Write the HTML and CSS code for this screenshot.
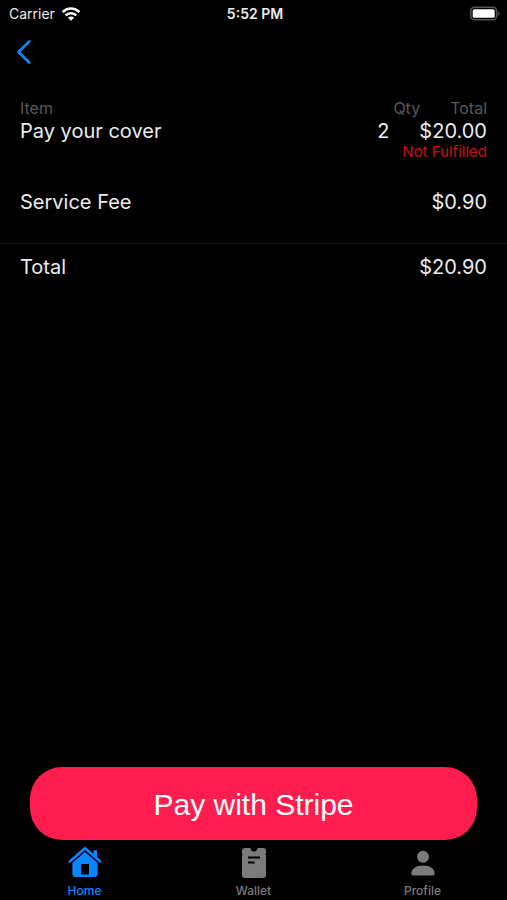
FILE: index.html
```html
<!DOCTYPE html>
<html lang="en">
<head>
<meta charset="utf-8">
<meta name="viewport" content="width=device-width, initial-scale=1">
<title>Checkout</title>
<link rel="stylesheet" href="styles.css">
</head>
<body>
<header class="status">
  <div class="carrier">
    <span>Carrier</span>
    <svg width="20" height="14" viewBox="0 0 20 14" fill="none" stroke="#fff" stroke-width="2.5" aria-hidden="true">
      <path d="M1.6 5.1C6.4.4 13.6.4 18.4 5.1"/>
      <path d="M4.7 8.4C7.7 5.4 12.3 5.4 15.3 8.4"/>
      <path d="M10 13.8 6.9 10.7C8.6 9.1 11.4 9.1 13.1 10.7Z" fill="#fff" stroke="none"/>
    </svg>
  </div>
  <span class="time">5:52 PM</span>
  <svg class="battery" width="32" height="16" viewBox="0 0 32 16" aria-hidden="true">
    <rect x="1.7" y="1.2" width="26" height="12.6" rx="4" fill="none" stroke="#555" stroke-width="1.6"/>
    <rect x="3.7" y="3.2" width="22" height="8.6" rx="1.6" fill="#fff"/>
    <path d="M29.3 5.2C31.2 6 31.2 9 29.3 9.8Z" fill="#555"/>
  </svg>
</header>
<nav class="topbar">
  <a class="back" href="#" aria-label="Back">
    <svg width="16" height="26" viewBox="0 0 16 26" fill="none" stroke="#1283f0" stroke-width="2.8" stroke-linecap="round" stroke-linejoin="round"><path d="M13.2 2.6 2.5 13 13.2 23.4"/></svg>
  </a>
</nav>
<main>
  <table class="order">
    <thead>
      <tr class="head"><th class="name">Item</th><th>Qty</th><th>Total</th></tr>
    </thead>
    <tbody>
      <tr><td class="name">Pay your cover</td><td>2</td><td>$20.00</td></tr>
      <tr class="note"><td>Not Fulfilled</td></tr>
      <tr class="fee"><td class="name">Service Fee</td><td>$0.90</td></tr>
    </tbody>
    <tfoot>
      <tr class="sum"><td class="name">Total</td><td>$20.90</td></tr>
    </tfoot>
  </table>
</main>
<div class="action"><button class="pay" type="button">Pay with Stripe</button></div>
<nav class="tabs">
  <a class="tab active" href="#">
    <svg width="34" height="32" viewBox="0 0 34 32" aria-hidden="true">
      <path d="M1.8 15.4 17 2.2 32.2 15.4" fill="none" stroke="currentColor" stroke-width="2.6" stroke-linecap="round" stroke-linejoin="round"/>
      <path d="M25.4 4.2H29V13L25.4 9.8Z" fill="currentColor"/>
      <path fill-rule="evenodd" fill="currentColor" d="M17 6 29.6 16.8V28Q29.6 31 26.6 31H7.4Q4.4 31 4.4 28V16.8ZM13 18V28.4H21V18Z"/>
    </svg>
    <span>Home</span>
  </a>
  <a class="tab" href="#">
    <svg width="34" height="32" viewBox="0 0 34 32" aria-hidden="true">
      <path fill="currentColor" d="M8 2H13.4Q14 5.6 17 5.6T20.6 2H26Q29 2 29 5V7.5L28.4 8.5 29 9.5V29Q29 32 26 32H8Q5 32 5 29V9.5L5.6 8.5 5 7.5V5Q5 2 8 2Z"/>
      <path d="M11 11.5H23M11 16.5H17.5" stroke="#000" stroke-width="2"/>
    </svg>
    <span>Wallet</span>
  </a>
  <a class="tab" href="#">
    <svg width="34" height="32" viewBox="0 0 34 32" fill="currentColor" aria-hidden="true">
      <circle cx="17" cy="10.8" r="6"/>
      <path d="M5.3 27.8C5.3 22.4 10.4 19.4 17 19.4S28.7 22.4 28.7 27.8Q28.7 29.5 27 29.5H7Q5.3 29.5 5.3 27.8Z"/>
    </svg>
    <span>Profile</span>
  </a>
</nav>
</body>
</html>
```
FILE: styles.css
```css
* {
  box-sizing: border-box;
}

body {
  margin: 0;
  min-height: 100vh;
  display: flex;
  flex-direction: column;
  background: #000;
  color: #ececec;
  font-family: Inter, "Liberation Sans", sans-serif;
}

.status {
  display: grid;
  grid-template-columns: 1fr auto 1fr;
  align-items: center;
  height: 27px;
  padding: 0 6px 0 9px;
  font-size: 14px;
}

.carrier {
  display: flex;
  align-items: center;
  gap: 6px;
}

.time {
  font-weight: 600;
}

.battery {
  justify-self: end;
}

.topbar {
  padding: 12px 16px;
}

.back {
  display: flex;
  width: 16px;
}

main {
  flex: 1;
  padding-top: 22px;
}

.order,
.order thead,
.order tbody,
.order tfoot {
  display: block;
}

.order tr {
  display: flex;
  justify-content: flex-end;
  gap: 30px;
  padding: 0 20px;
  font-size: 20px;
  line-height: 26px;
}

.order th,
.order td {
  padding: 0;
  font-weight: 400;
  text-align: left;
}

.order .name {
  flex: 1;
}

.order .head {
  color: #585858;
  font-size: 16px;
  line-height: 19px;
}

.order .note {
  color: #d00d0a;
  font-size: 15px;
  line-height: 16px;
}

.order .fee {
  padding-top: 29px;
  padding-bottom: 28px;
}

.order .sum {
  padding-top: 10px;
  border-top: 1px solid #101010;
}

.action {
  padding: 0 30px;
}

.pay {
  display: block;
  width: 100%;
  padding: 21px 20px 19px;
  border: 0;
  border-radius: 32px;
  background: #ff1d4f;
  color: #fff;
  font-family: "Liberation Sans", sans-serif;
  font-size: 30px;
  line-height: 33px;
}

.tabs {
  display: grid;
  grid-template-columns: repeat(3, 1fr);
  padding: 6px 0 2px;
}

.tab {
  display: flex;
  flex-direction: column;
  align-items: center;
  gap: 5px;
  color: #7b7b7b;
  font-size: 12px;
  font-weight: 500;
  line-height: 15px;
  text-decoration: none;
}

.active {
  color: #0a84ff;
}
```
